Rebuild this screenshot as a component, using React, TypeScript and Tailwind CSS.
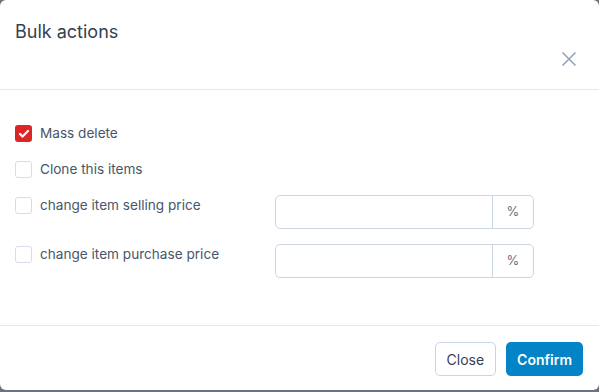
import React, { useState } from 'react';
import { Check } from 'lucide-react';

const rows = [
    { label: 'Mass delete', checked: true, input: false },
    { label: 'Clone this items', checked: false, input: false },
    { label: 'change item selling price', checked: false, input: true },
    { label: 'change item purchase price', checked: false, input: true },
];

const App: React.FC = () => {
    const [checks, setChecks] = useState(rows.map((r) => r.checked));

    return (
        <div className="w-[599px] h-[392px] bg-[#6b7280] font-['Inter',sans-serif]">
            <div className="w-[599px] h-[390px] bg-white rounded-md flex flex-col">
                {/* Header */}
                <div className="h-[90px] border-b border-[#e2e8f0] flex justify-between pl-[15px] pr-[22px]">
                    <h2 className="mt-[20px] text-[18px] leading-[24px] text-[#334155]">Bulk actions</h2>
                    <button className="mt-[51px] h-[16px] text-[#94a3b8]">
                        <svg width="16" height="16" viewBox="0 0 16 16" fill="none" stroke="currentColor" strokeWidth="1.6">
                            <path d="M1.5 1.5L14.5 14.5M14.5 1.5L1.5 14.5" />
                        </svg>
                    </button>
                </div>

                {/* Body */}
                <div className="flex-1 pl-[15px] pt-[35px]">
                    {rows.map((row, i) => (
                        <div
                            key={row.label}
                            className={`flex items-start ${i < 2 ? 'h-[36px]' : 'h-[49px]'}`}
                        >
                            <label className="flex items-center gap-[8px] w-[260px] cursor-pointer">
                                <span
                                    onClick={() => setChecks(checks.map((c, j) => (j === i ? !c : c)))}
                                    className={`w-[17px] h-[17px] rounded-[3px] flex items-center justify-center ${
                                        checks[i] ? 'bg-[#dc2626]' : 'border border-[#d5dde7] bg-white'
                                    }`}
                                >
                                    {checks[i] && <Check className="w-[12px] h-[12px] text-white" strokeWidth={4.5} />}
                                </span>
                                <span className="text-[13.6px] leading-[17px] text-[#475569]">{row.label}</span>
                            </label>
                            {row.input && (
                                <div className="-mt-[2px] flex w-[259px] h-[34px] border border-[#cbd5e1] rounded-[5px]">
                                    <input className="flex-1 min-w-0 px-3 outline-none rounded-l-[5px]" />
                                    <span className="w-[41px] border-l border-[#cbd5e1] flex items-center justify-center text-[13px] text-[#64748b]">
                                        %
                                    </span>
                                </div>
                            )}
                        </div>
                    ))}
                </div>

                {/* Footer */}
                <div className="h-[65px] border-t border-[#e2e8f0] flex justify-end items-start gap-[10px] pt-[16px] pr-[16px]">
                    <button className="h-[34px] px-[11px] border border-[#cbd5e1] rounded-[5px] text-[14px] text-[#334155]">
                        Close
                    </button>
                    <button className="h-[34px] px-[11px] bg-[#0284c7] rounded-[5px] text-[14px] font-semibold text-white">
                        Confirm
                    </button>
                </div>
            </div>
        </div>
    );
};

export default App;
